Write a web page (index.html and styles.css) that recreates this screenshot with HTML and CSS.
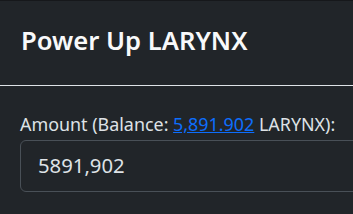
FILE: index.html
```html
<!DOCTYPE html>
<html lang="en">
<head>
    <meta charset="UTF-8">
    <meta name="viewport" content="width=device-width, initial-scale=1.0">
    <title>Power Up LARYNX</title>
    <link rel="stylesheet" href="styles.css">
</head>
<body>
    <div class="modal-content">
        <div class="modal-header">
            <h5 class="modal-title">Power Up LARYNX</h5>
        </div>
        <div class="modal-body">
            <label for="amount" class="form-label">Amount (Balance: <a href="#">5,891.902</a> LARYNX):</label>
            <input type="text" id="amount" class="form-control" value="5891,902">
        </div>
    </div>
</body>
</html>
```
FILE: styles.css
```css
body {
    margin: 0;
    background: #212529;
    font-family: 'Noto Sans', 'Open Sans', sans-serif;
    color: #dee2e6;
    overflow: hidden;
}
.modal-content {
    border-top: 1px solid #16181b;
    background: #212529;
    height: 213px;
    overflow: hidden;
}
.modal-header {
    padding: 25px 21px 28px;
    border-bottom: 1px solid #dee2e6;
}
.modal-title {
    margin: 0;
    font-size: 25.6px;
    font-weight: 600;
    line-height: 1.2;
    color: #f8f9fa;
}
.modal-body {
    padding: 28px 0 0 20px;
}
.form-label {
    display: block;
    white-space: nowrap;
    font-size: 17.9px;
    line-height: 1.2;
    margin-bottom: 5px;
    color: #dee2e6;
}
.form-label a {
    color: #0d6efd;
}
.form-control {
    display: block;
    box-sizing: border-box;
    width: calc(100% + 20px);
    padding: 12px 17px 13px;
    font-family: inherit;
    font-size: 20.3px;
    line-height: 1.2;
    color: #dee2e6;
    background: #212529;
    border: 1px solid #495057;
    border-radius: 6px;
    outline: none;
}
```
